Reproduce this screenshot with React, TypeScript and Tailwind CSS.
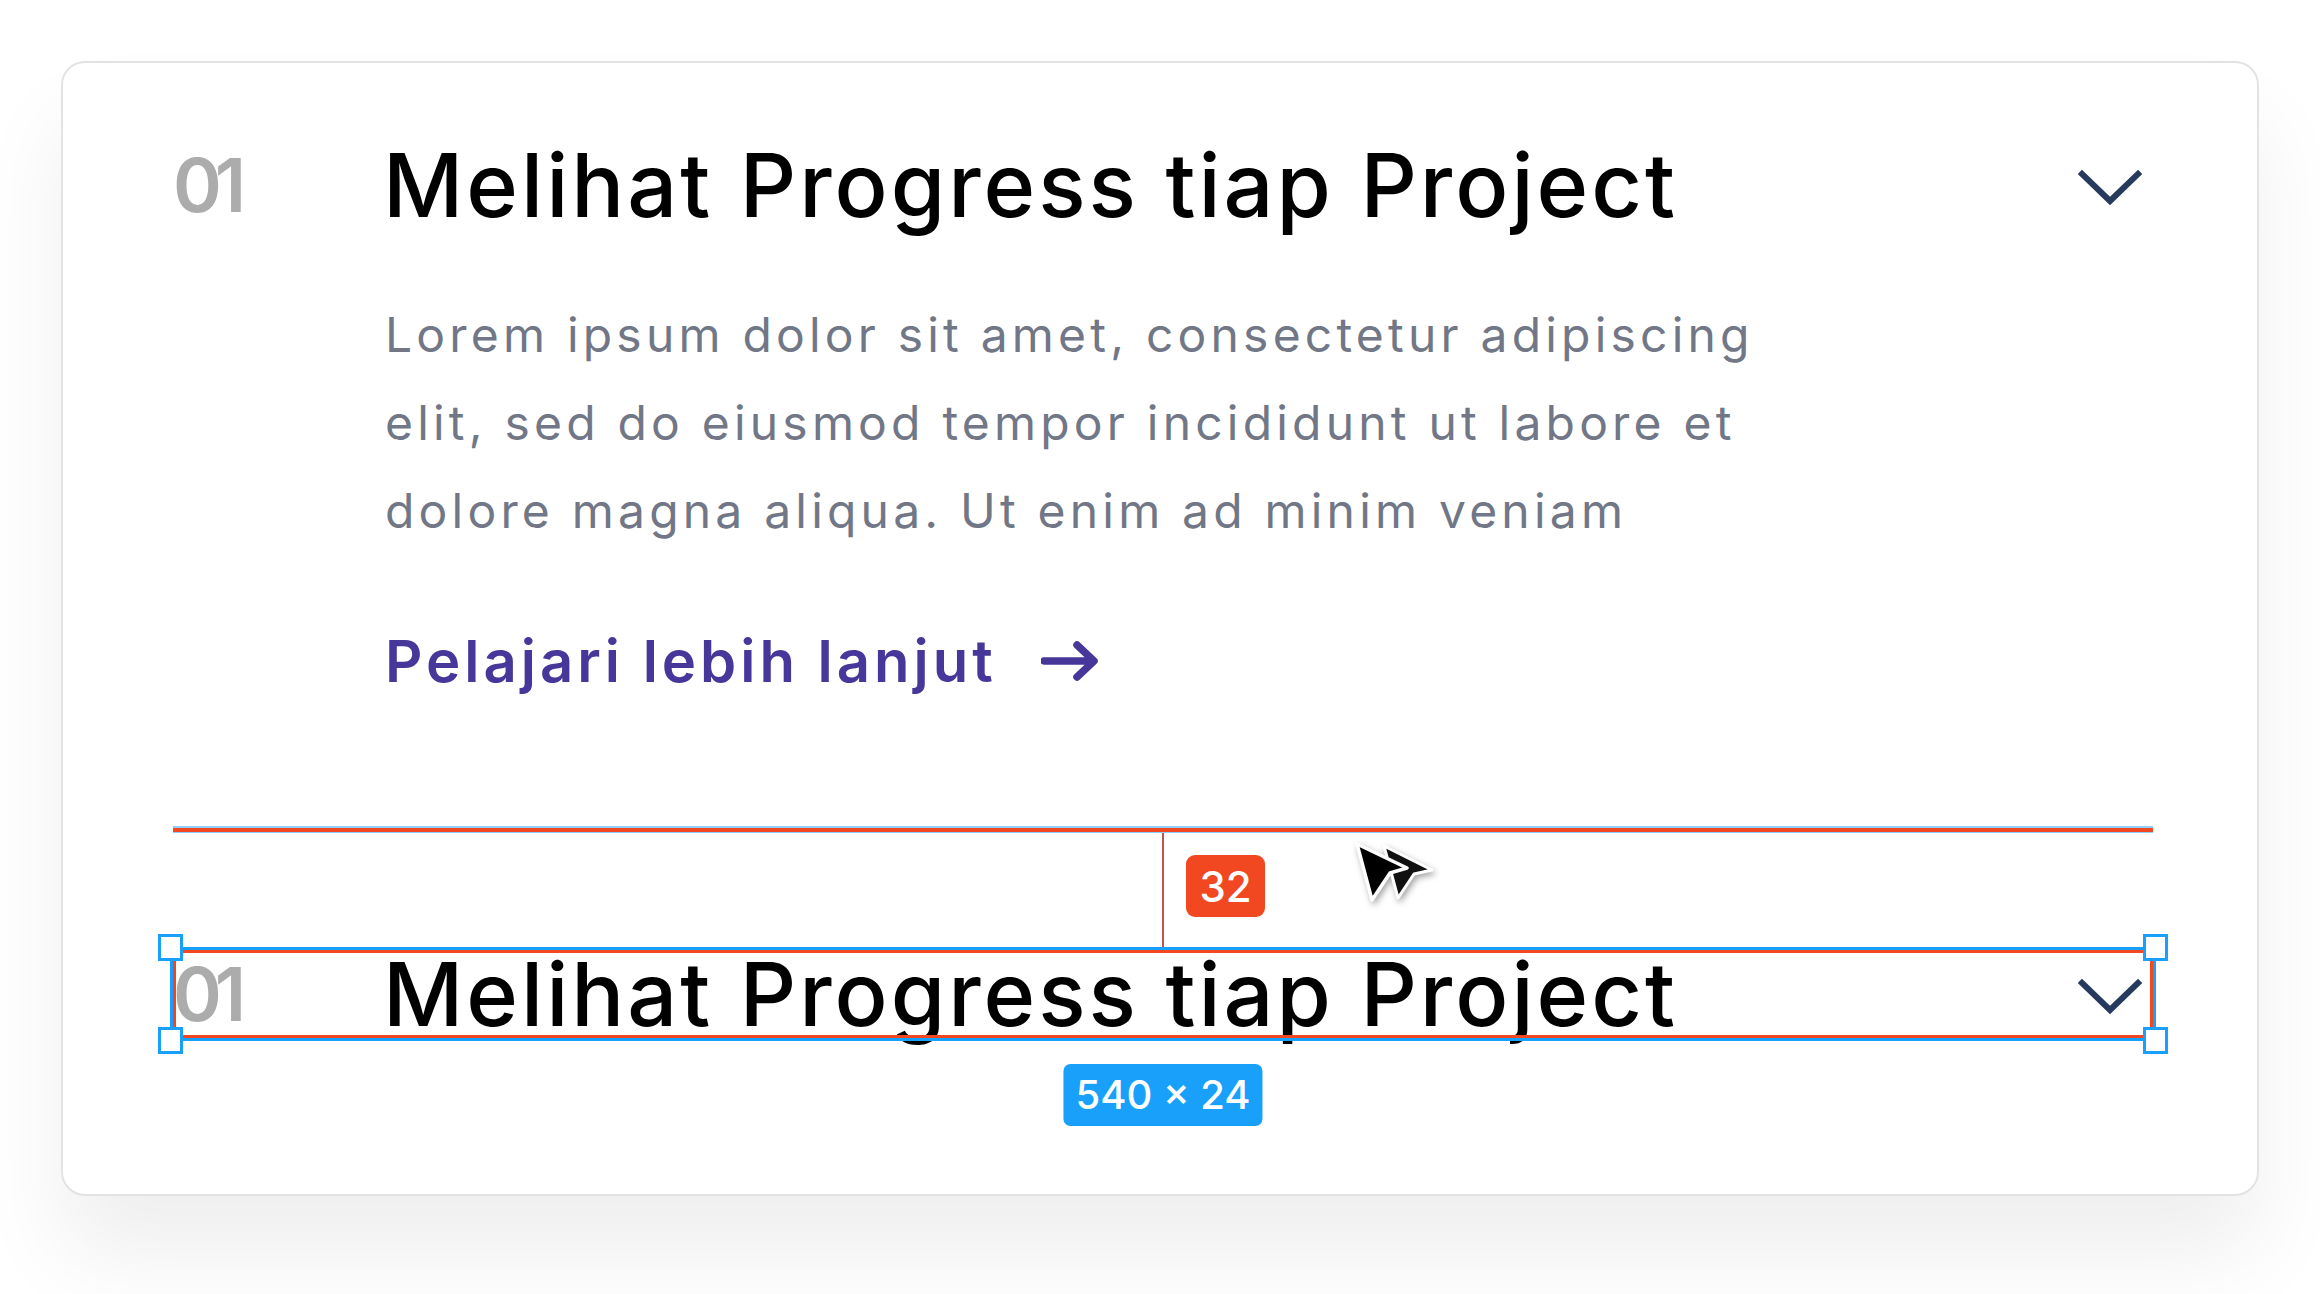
import React from "react";

const font = { fontFamily: "Inter, 'Noto Sans', sans-serif" };

function Chevron() {
  return (
    <svg width="64" height="40" viewBox="0 0 64 40" className="mr-[11px] mt-[6px] shrink-0">
      <polyline points="4,6 32,33 60,6" fill="none" stroke="#263a5e" strokeWidth="6" strokeLinecap="square" strokeLinejoin="miter" />
    </svg>
  );
}

function Row() {
  return (
    <div className="flex h-[88px] items-center">
      <span className="w-[210px] shrink-0 text-[74px] font-semibold leading-[88px] tracking-[-7px] text-[#acacac]">01</span>
      <h2 className="flex-1 text-[88px] font-medium leading-[88px] tracking-[3px] text-black">
        Melihat Progress tiap Project
      </h2>
      <Chevron />
    </div>
  );
}

function Cursor() {
  return (
    <svg
      width="96"
      height="80"
      viewBox="0 0 96 80"
      className="absolute left-[1350px] top-[836px]"
      style={{ filter: "drop-shadow(2px 3px 3px rgba(0,0,0,0.35))" }}
    >
      <path d="M34 10 L82 34 L64 38 L48 62 Z" fill="#111" stroke="#fff" strokeWidth="3" strokeLinejoin="round" />
      <path d="M7 8 L57 32 L40 37 L22 64 Z" fill="#000" stroke="#fff" strokeWidth="3.5" strokeLinejoin="round" />
    </svg>
  );
}

function Handle({ className }: { className: string }) {
  return <div className={`absolute h-[27px] w-[25px] border-[3px] border-[#18a0fb] bg-white ${className}`} />;
}

export default function App() {
  return (
    <div className="min-h-screen w-full bg-white pl-[61px] pt-[61px]" style={font}>
      <div className="flex h-[1135px] w-[2198px] flex-col rounded-[24px] border-2 border-[#e3e3e3] bg-white pl-[110px] pr-[104px] pt-[78px] shadow-[0_60px_90px_rgba(0,0,0,0.065)]">
        <Row />

        <div className="ml-[212px] mt-[62px] flex flex-col text-[48px] leading-[88px] tracking-[4.2px] text-[#717786]">
          <span>Lorem ipsum dolor sit amet, consectetur adipiscing</span>
          <span>elit, sed do eiusmod tempor incididunt ut labore et</span>
          <span>dolore magna aliqua. Ut enim ad minim veniam</span>
        </div>

        <div className="ml-[212px] mt-[62px] flex h-[88px] items-center gap-[44px] text-[58px] font-semibold tracking-[4px] text-[#47379a]">
          <span>Pelajari lebih lanjut</span>
          <svg width="60" height="42" viewBox="0 0 60 42">
            <path d="M3 21 H52 M36 5 L53 21 L36 37" fill="none" stroke="#47379a" strokeWidth="7.5" strokeLinecap="round" strokeLinejoin="round" />
          </svg>
        </div>

        <div className="mt-[121px] flex h-[7px] flex-col">
          <div className="h-[2px] bg-[#8fd0fb]" />
          <div className="h-[4px] bg-[#f24822]" />
          <div className="h-[1px] bg-[#8fd0fb]" />
        </div>

        <div className="relative flex h-[117px] justify-center">
          <div className="w-[2px] bg-[#b8574c]" />
          <div className="absolute left-[calc(50%+23px)] top-[22px] flex h-[62px] w-[79px] items-center justify-center rounded-[9px] bg-[#f24822] text-[42px] font-medium text-white">
            32
          </div>
        </div>

        <div className="relative">
          <Row />
          <div className="pointer-events-none absolute inset-[-3px] border-[3px] border-[#18a0fb]" />
          <div className="pointer-events-none absolute inset-0 border-[3px] border-[#f24822]" />
          <Handle className="left-[-15px] top-[-16px]" />
          <Handle className="left-[-15px] bottom-[-16px]" />
          <Handle className="right-[-15px] top-[-16px]" />
          <Handle className="right-[-15px] bottom-[-16px]" />
          <div className="absolute left-1/2 top-[114px] -translate-x-1/2 whitespace-nowrap rounded-[7px] bg-[#18a0fb] px-[12px] py-[6px] text-[40px] font-medium leading-[50px] text-white">
            540 × 24
          </div>
        </div>
      </div>
      <Cursor />
    </div>
  );
}
